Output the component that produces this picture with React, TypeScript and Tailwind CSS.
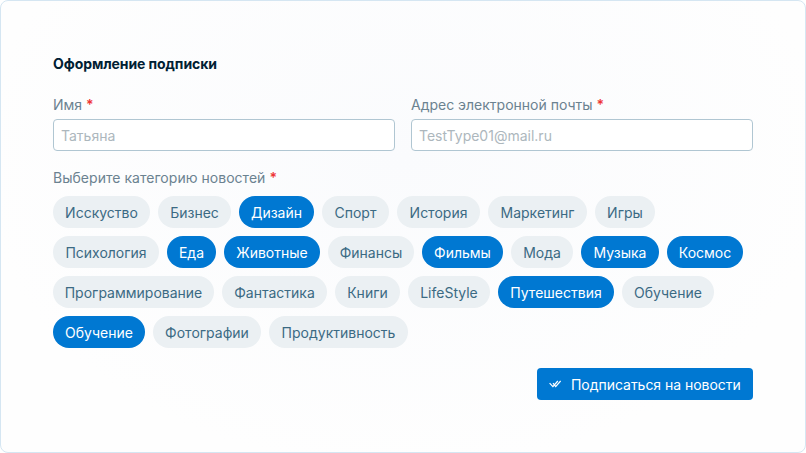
const ROWS: [string, boolean, string][][] = [
  [['Исскуство', false, 'w-[97px]'], ['Бизнес', false, 'w-[73px]'], ['Дизайн', true, 'w-[75px]'], ['Спорт', false, 'w-[67px]'], ['История', false, 'w-[83px]'], ['Маркетинг', false, 'w-[99px]'], ['Игры', false, 'w-[60px]']],
  [['Психология', false, 'w-[106px]'], ['Еда', true, 'w-[49px]'], ['Животные', true, 'w-[96px]'], ['Финансы', false, 'w-[86px]'], ['Фильмы', true, 'w-[81px]'], ['Мода', false, 'w-[62px]'], ['Музыка', true, 'w-[78px]'], ['Космос', true, 'w-[76px]']],
  [['Программирование', false, 'w-[161px]'], ['Фантастика', false, 'w-[105px]'], ['Книги', false, 'w-[65px]'], ['LifeStyle', false, 'w-[82px]'], ['Путешествия', true, 'w-[116px]'], ['Обучение', false, 'w-[92px]']],
  [['Обучение', true, 'w-[92px]'], ['Фотографии', false, 'w-[108px]'], ['Продуктивность', false, 'w-[139px]']],
];

function Required() {
  return <span className="font-semibold text-[#ee3535]">*</span>;
}

function Field({ label, placeholder }: { label: string; placeholder: string }) {
  return (
    <label className="flex flex-1 flex-col gap-1">
      <span className="h-5 text-[#6b8290]">{label} <Required /></span>
      <input placeholder={placeholder} className="h-8 w-full rounded-[4px] border border-[#b0c6d2] bg-white px-[7px] text-[14px] leading-5 placeholder:text-[#adb7bd]" />
    </label>
  );
}

export default function App() {
  return (
    <main className="h-[453px] w-[806px] rounded-[8px] border border-[#d5e6f2] bg-radial-[at_50%_35%] from-[#fafbfd] to-[#fefefe] to-75% px-[52px] pt-[53px] font-['Inter',sans-serif] text-[14px] leading-5">
      <h1 className="h-5 font-bold tracking-[-0.08px] text-[#002033]">Оформление подписки</h1>
      <form>
        <div className="mt-[21px] flex gap-4">
          <Field label="Имя" placeholder="Татьяна" />
          <Field label="Адрес электронной почты" placeholder="TestType01@mail.ru" />
        </div>
        <p className="mt-[17px] h-5 tracking-[0.03px] text-[#6b8290]">Выберите категорию новостей <Required /></p>
        <div className="mt-2 flex flex-col gap-2">
          {ROWS.map((row, i) => (
            <div key={i} className="flex gap-2">
              {row.map(([name, on, width]) => (
                <button key={name} type="button" className={`h-8 shrink-0 whitespace-nowrap rounded-full pt-px ${width} ${on ? 'bg-[#0078d2] text-white' : 'bg-[#ebf0f3] text-[#3b6a83]'}`}>{name}</button>
              ))}
            </div>
          ))}
        </div>
        <div className="mt-5 flex justify-end">
          <button type="button" className="flex h-8 w-[216px] items-center gap-[10px] rounded-[4px] bg-[#0078d2] pl-3 text-white">
            <svg width="12" height="12" viewBox="0 0 12 12" fill="none" stroke="currentColor" strokeWidth="1.2"><path d="M.6 5.2 3.9 8.6 8.8 3M4 5.2l2.7 3.4 4.9-5.6" /></svg>
            <span className="whitespace-nowrap pt-px tracking-[-0.03px]">Подписаться на новости</span>
          </button>
        </div>
      </form>
    </main>
  );
}
